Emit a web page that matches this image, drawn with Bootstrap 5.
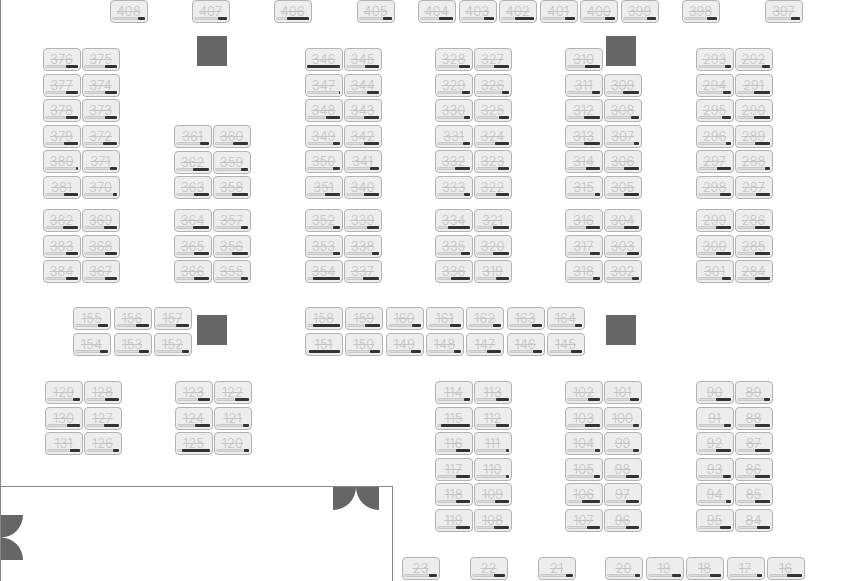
<!DOCTYPE html>
<html lang="en">
<head>
<meta charset="utf-8">
<meta name="viewport" content="width=device-width, initial-scale=1">
<title>Hall floor plan</title>
<link href="https://cdn.jsdelivr.net/npm/bootstrap@5.3.0/dist/css/bootstrap.min.css" rel="stylesheet">
<style>
  body { font-family: Inter, "Liberation Sans", sans-serif; background: #fff; }
  .hall { border-left: 1px solid #888; }

  /* Stand blocks sit at their surveyed place on the plan */
  .block { position: absolute; width: 77px; }
  .deep-2 { height: 49px; }
  .deep-3 { height: 74px; }
  .deep-6 { height: 151px; }
  .wide-1 { width: 38px; }
  .wide-3 { width: 119px; }
  .wide-5 { width: 200px; }
  .wide-6 { width: 241px; }
  .wide-7 { width: 280px; }

  .stand {
    width: 38px; height: 23px; padding: 0 2px 2px 1px;
    border: 1px solid #b2b2b2; border-radius: 4px;
    background: #ededed; color: #c4c4c4;
    font-size: 13px; font-weight: 300; line-height: 17px;
  }
  .stand s { height: 14px; margin-top: 2px; }
  .meter {
    height: 3px; width: 33px; border-radius: 2px;
    background: #dcdcdc; border: 1px solid #c8c8c8; position: relative;
  }
  .meter-fill { position: absolute; right: -1px; top: -1px; height: 3px; border-radius: 1px; background: #333; }

  .y-north { top: 0; } .y-a { top: 48px; } .y-a3 { top: 125px; } .y-b { top: 209px; }
  .y-mid { top: 307px; } .y-c { top: 381px; } .y-south { top: 557px; }
  .x-42 { left: 42px; } .x-44 { left: 44px; } .x-72 { left: 72px; } .x-109 { left: 109px; }
  .x-173 { left: 173px; } .x-174 { left: 174px; } .x-191 { left: 191px; } .x-273 { left: 273px; }
  .x-304 { left: 304px; } .x-356 { left: 356px; } .x-401 { left: 401px; } .x-417 { left: 417px; }
  .x-434 { left: 434px; } .x-469 { left: 469px; } .x-537 { left: 537px; } .x-564 { left: 564px; }
  .x-604 { left: 604px; } .x-681 { left: 681px; } .x-695 { left: 695px; } .x-764 { left: 764px; }

  .pillar { position: absolute; width: 30px; height: 30px; background: #666; }
  .p-west { left: 196px; } .p-east { left: 605px; }
  .p-north { top: 36px; } .p-south { top: 315px; }

  .foyer { position: absolute; left: 0; top: 486px; bottom: 0; width: 392px; border: solid #888; border-width: 1px 1px 0 0; }
  .door { position: absolute; fill: #666; }
  .door-north { left: 332px; top: 0; }
  .door-west { left: 0; top: 28px; }
</style>
</head>
<body>
<main class="hall position-relative min-vh-100 overflow-hidden" aria-label="Hall floor plan">

  <div class="block wide-1 x-109 y-north" data-stands="408:20"></div>
  <div class="block wide-1 x-191 y-north" data-stands="407:26"></div>
  <div class="block wide-1 x-273 y-north" data-stands="406:66"></div>
  <div class="block wide-1 x-356 y-north" data-stands="405:27"></div>
  <div class="block wide-6 x-417 y-north" data-stands="404:42 403:29 402:58 401:31 400:29 399:28"></div>
  <div class="block wide-1 x-681 y-north" data-stands="398:29"></div>
  <div class="block wide-1 x-764 y-north" data-stands="397:26"></div>

  <div class="block deep-6 x-42 y-a" data-stands="376:35 375:35/377:35 374:35/378:35 373:35/379:43 372:41/380:7 371:20/381:43 370:11"></div>
  <div class="block deep-3 x-173 y-a3" data-stands="361:28 360:45/362:49 359:20/363:46 358:47"></div>
  <div class="block deep-6 x-304 y-a" data-stands="346:100 345:43/347:2 344:36/348:43 343:46/349:21 342:46/350:20 341:28/351:45 340:46"></div>
  <div class="block deep-6 x-434 y-a" data-stands="328:34 327:46/329:23 326:22/330:18 325:31/331:21 324:41/332:45 323:32/333:19 322:38"></div>
  <div class="block deep-6 x-564 y-a" data-stands="310:45/311:24 309:47/312:47 308:24/313:47 307:15/314:41 306:45/315:14 305:45"></div>
  <div class="block deep-6 x-695 y-a" data-stands="293:19 292:23/294:25 291:48/295:27 290:47/296:15 289:44/297:43 288:16/298:32 287:43"></div>

  <div class="block deep-3 x-42 y-b" data-stands="382:45 369:39/383:36 368:36/384:36 367:36"></div>
  <div class="block deep-3 x-173 y-b" data-stands="364:48 357:21/365:45 356:47/366:45 355:21"></div>
  <div class="block deep-3 x-304 y-b" data-stands="352:21 339:36/353:21 338:22/354:81 337:47"></div>
  <div class="block deep-3 x-434 y-b" data-stands="334:66 321:49/335:27 320:49/336:57 319:39"></div>
  <div class="block deep-3 x-564 y-b" data-stands="316:41 304:45/317:30 303:35/318:20 302:20"></div>
  <div class="block deep-3 x-695 y-b" data-stands="299:44 286:44/300:44 285:44/301:28 284:44"></div>

  <div class="block wide-3 deep-2 x-72 y-mid" data-stands="155:31 156:38 157:38/154:23 153:31 152:22"></div>
  <div class="block wide-7 deep-2 x-304 y-mid" data-stands="158:81 159:46 160:27 161:34 162:23 163:31 164:20/151:93 150:30 149:31 148:20 147:43 146:26 145:33"></div>

  <div class="block deep-3 x-44 y-c" data-stands="129:21 128:43/130:38 127:45/131:31 126:19"></div>
  <div class="block deep-3 x-174 y-c" data-stands="123:37 122:42/124:44 121:18/125:84 120:16"></div>
  <div class="block deep-6 x-434 y-c" data-stands="114:17 113:40/115:88 112:38/116:42 111:10/117:42 110:10/118:41 109:41/119:41 108:44"></div>
  <div class="block deep-6 x-564 y-c" data-stands="102:37 101:27/103:44 100:19/104:16 99:17/105:17 98:40/106:54 97:40/107:39 96:39"></div>
  <div class="block deep-6 x-695 y-c" data-stands="90:45 89:17/91:20 88:46/92:44 87:46/93:24 86:46/94:15 85:46/95:33 84:40"></div>

  <div class="block wide-1 x-401 y-south" data-stands="23:25"></div>
  <div class="block wide-1 x-469 y-south" data-stands="22:34"></div>
  <div class="block wide-1 x-537 y-south" data-stands="21:22"></div>
  <div class="block wide-5 x-604 y-south" data-stands="20:16 19:28 18:34 17:16 16:46"></div>

  <div class="pillar p-west p-north"></div>
  <div class="pillar p-east p-north"></div>
  <div class="pillar p-west p-south"></div>
  <div class="pillar p-east p-south"></div>

  <section class="foyer" aria-label="Foyer">
    <svg class="door door-north" width="46" height="23" aria-hidden="true"><path d="M0 0H23A23 23 0 0 1 0 23ZM46 0H23A23 23 0 0 0 46 23Z"/></svg>
    <svg class="door door-west" width="22" height="45" aria-hidden="true"><path d="M0 0H22A22 22.5 0 0 1 0 22.5ZM0 45H22A22 22.5 0 0 0 0 22.5Z"/></svg>
  </section>
</main>

<script src="https://cdn.jsdelivr.net/npm/bootstrap@5.3.0/dist/js/bootstrap.bundle.min.js"></script>
<script>
  // Each block lists its rows split by "/", each stand as number:percent
  document.querySelectorAll('[data-stands]').forEach(block => {
    block.classList.add('d-flex', 'flex-column', 'justify-content-between');
    block.innerHTML = block.dataset.stands.split('/').map(row =>
      '<div class="d-flex justify-content-between">' + row.split(' ').map(item => {
        const [number, share] = item.split(':');
        return `<button type="button" class="stand d-flex flex-column align-items-center justify-content-between flex-shrink-0">
          <s>${number}</s><span class="meter"><span class="meter-fill" style="width:${Math.round(share * 33 / 100)}px"></span></span></button>`;
      }).join('') + '</div>').join('');
  });
</script>
</body>
</html>
